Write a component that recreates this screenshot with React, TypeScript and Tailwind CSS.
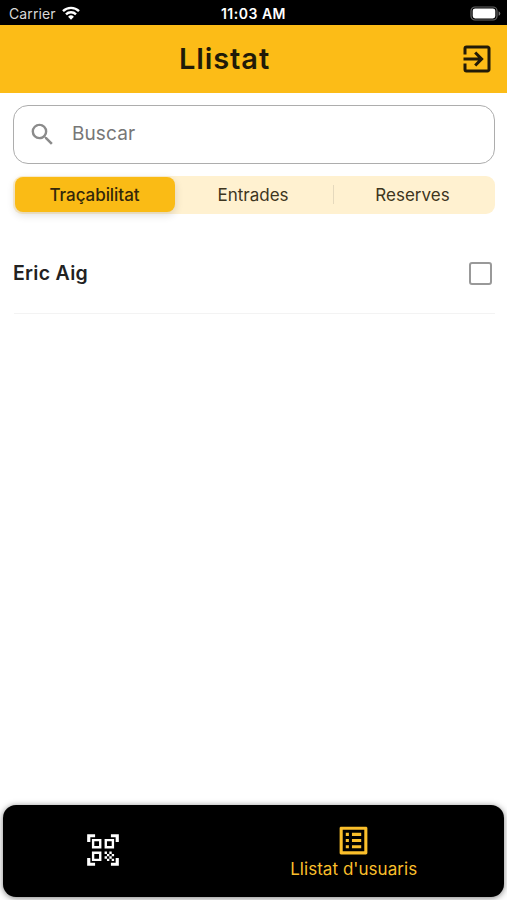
import { MdExitToApp, MdListAlt, MdQrCodeScanner, MdSearch } from "react-icons/md";

function StatusBar() {
  return (
    <div className="grid h-[25px] grid-cols-[1fr_80px_1fr] items-center bg-black pr-[6px] text-[14px] text-white">
      <div className="flex items-center gap-[6px] pt-px pl-[9px]">
        <span className="tracking-[0.1px] text-[#d8d8d8]">Carrier</span>
        <svg width="18" height="14" viewBox="0 0 18 14" fill="none" stroke="white" strokeWidth="2.4">
          <path d="M1 5.2a11.3 11.3 0 0 1 16 0" />
          <path d="M4 8.3a7.1 7.1 0 0 1 10 0" />
          <path d="M9 13.8 6.1 10.8a4.1 4.1 0 0 1 5.8 0Z" fill="white" stroke="none" />
        </svg>
      </div>
      <div className="pt-px pl-[6px] text-center font-semibold tracking-[0.5px] whitespace-nowrap">11:03 AM</div>
      <div className="flex items-center justify-end pt-px">
        <svg width="31" height="15" viewBox="0 0 31 15">
          <rect x="1" y="1" width="26" height="13" rx="4" fill="none" stroke="#666" strokeWidth="1.2" />
          <rect x="2.7" y="2.4" width="22.6" height="10" rx="2.4" fill="white" />
          <path d="M28.6 5.2v4.6q1.7-.7 1.7-2.3t-1.7-2.3" fill="#777" />
        </svg>
      </div>
    </div>
  );
}

function Tabs() {
  return (
    <div className="mt-[12px] mr-[12px] ml-[13px] grid h-[38px] grid-cols-[162px_1fr_161px] items-center rounded-[9px] bg-[#fff1d0] text-center text-[17px] text-[#3d3520]">
      <div className="ml-[2px] flex h-[35px] items-center justify-center rounded-[8px] bg-[#fabb15] pt-[2px] pr-px font-medium tracking-[-0.05px] text-[#33270a] shadow-[0_3px_8px_rgba(0,0,0,0.14)]">
        Traçabilitat
      </div>
      <div className="flex h-[19px] items-center justify-center border-r border-[#e5d9bd]">
        <span className="pt-[2px] pr-[2px]">Entrades</span>
      </div>
      <div className="flex h-[19px] items-center justify-center pt-[2px] pr-[4px]">Reserves</div>
    </div>
  );
}

export default function App() {
  return (
    <div className="flex h-[900px] w-[507px] flex-col overflow-hidden bg-white font-['Inter','Liberation_Sans',sans-serif]">
      <StatusBar />
      <header className="flex h-[67.5px] items-center justify-between bg-[#fcbc17] pr-[12px] text-[#211a08]">
        <h1 className="w-[449px] text-center text-[29px] font-semibold tracking-[0.9px]">Llistat</h1>
        <MdExitToApp className="size-[36px]" />
      </header>
      <main className="flex-1">
        <div className="mr-[12px] ml-[13px] mt-[12px] flex h-[59px] items-center rounded-[15px] border-[1.5px] border-[#adadad] pl-[14px]">
          <MdSearch className="size-[29px] text-[#8b8b8b]" />
          <span className="ml-[15px] text-[19px] tracking-[0.1px] text-[#777]">Buscar</span>
        </div>
        <Tabs />
        <div className="mr-[12px] ml-[14px] flex h-[100px] items-center justify-between border-b border-[#f3f3f3] pt-[20px]">
          <span className="-ml-px pt-[2px] text-[19.5px] font-semibold tracking-[0.3px] text-[#222]">Eric Aig</span>
          <span className="mr-[3.5px] size-[23px] rounded-[3px] border-2 border-[#999]" />
        </div>
      </main>
      <nav className="mx-[3px] mb-[3px] grid h-[92px] grid-cols-[2fr_3fr] rounded-[13px] bg-black shadow-[0_1px_6px_rgba(0,0,0,0.5)]">
        <div className="flex items-center justify-center pb-[3px] text-white">
          <MdQrCodeScanner className="size-[38px]" />
        </div>
        <div className="flex flex-col items-center pt-[17px] text-[#fabf2b]">
          <MdListAlt className="size-[37px]" />
          <span className="-mt-[2px] text-[17px] tracking-[0.05px]">Llistat d'usuaris</span>
        </div>
      </nav>
    </div>
  );
}
